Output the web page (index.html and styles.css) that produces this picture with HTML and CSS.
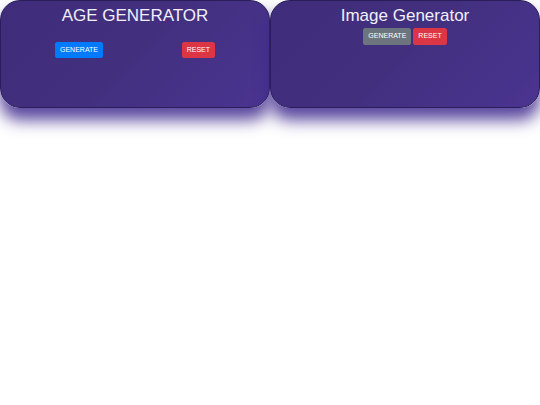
FILE: index.html
```html
<!DOCTYPE html>
<html>
<head>
<meta charset="utf-8">
<link rel="stylesheet" href="styles.css">
</head>
<body>
<div class="row">
  <section class="card">
    <h1 class="title">AGE GENERATOR</h1>
    <div class="actions actions-spread">
      <button class="btn btn-primary">GENERATE</button>
      <button class="btn btn-danger">RESET</button>
    </div>
  </section>
  <section class="card">
    <h1 class="title">Image Generator</h1>
    <div class="actions actions-center">
      <button class="btn btn-secondary">GENERATE</button>
      <button class="btn btn-danger">RESET</button>
    </div>
  </section>
</div>
</body>
</html>
```

FILE: styles.css
```css
html, body {
  margin: 0;
  padding: 0;
  background: #ffffff;
  font-family: "Liberation Sans", Arial, sans-serif;
}

.row {
  display: flex;
  width: 540px;
  padding-bottom: 40px;
}

.card {
  box-sizing: border-box;
  width: 270px;
  height: 108px;
  padding-top: 4px;
  border: 1px solid #2a1d5c;
  border-radius: 20px;
  background: linear-gradient(135deg, #3f2d7c 0%, #42307f 50%, #4a3490 100%);
  box-shadow: 0 12px 16px rgba(60, 38, 140, 0.85);
}

.title {
  margin: 0;
  font-size: 17px;
  line-height: 21px;
  font-weight: normal;
  text-align: center;
  color: #f1effa;
}

.actions {
  display: flex;
}

.actions-spread {
  justify-content: space-between;
  margin-top: 16px;
  padding: 0 54px;
}

.actions-center {
  justify-content: center;
  gap: 2px;
  margin-top: 2px;
}

.btn {
  font-family: "Liberation Sans", Arial, sans-serif;
  font-size: 7px;
  line-height: 8px;
  padding: 3px 4px 3px;
  border: 1px solid transparent;
  border-radius: 2px;
  color: #ffffff;
  cursor: pointer;
}

.actions-center .btn {
  padding-bottom: 4px;
}

.btn-primary {
  background: #007bff;
  border-color: #007bff;
}

.btn-danger {
  background: #dc3545;
  border-color: #dc3545;
}

.btn-secondary {
  background: #6c757d;
  border-color: #6c757d;
}
```
